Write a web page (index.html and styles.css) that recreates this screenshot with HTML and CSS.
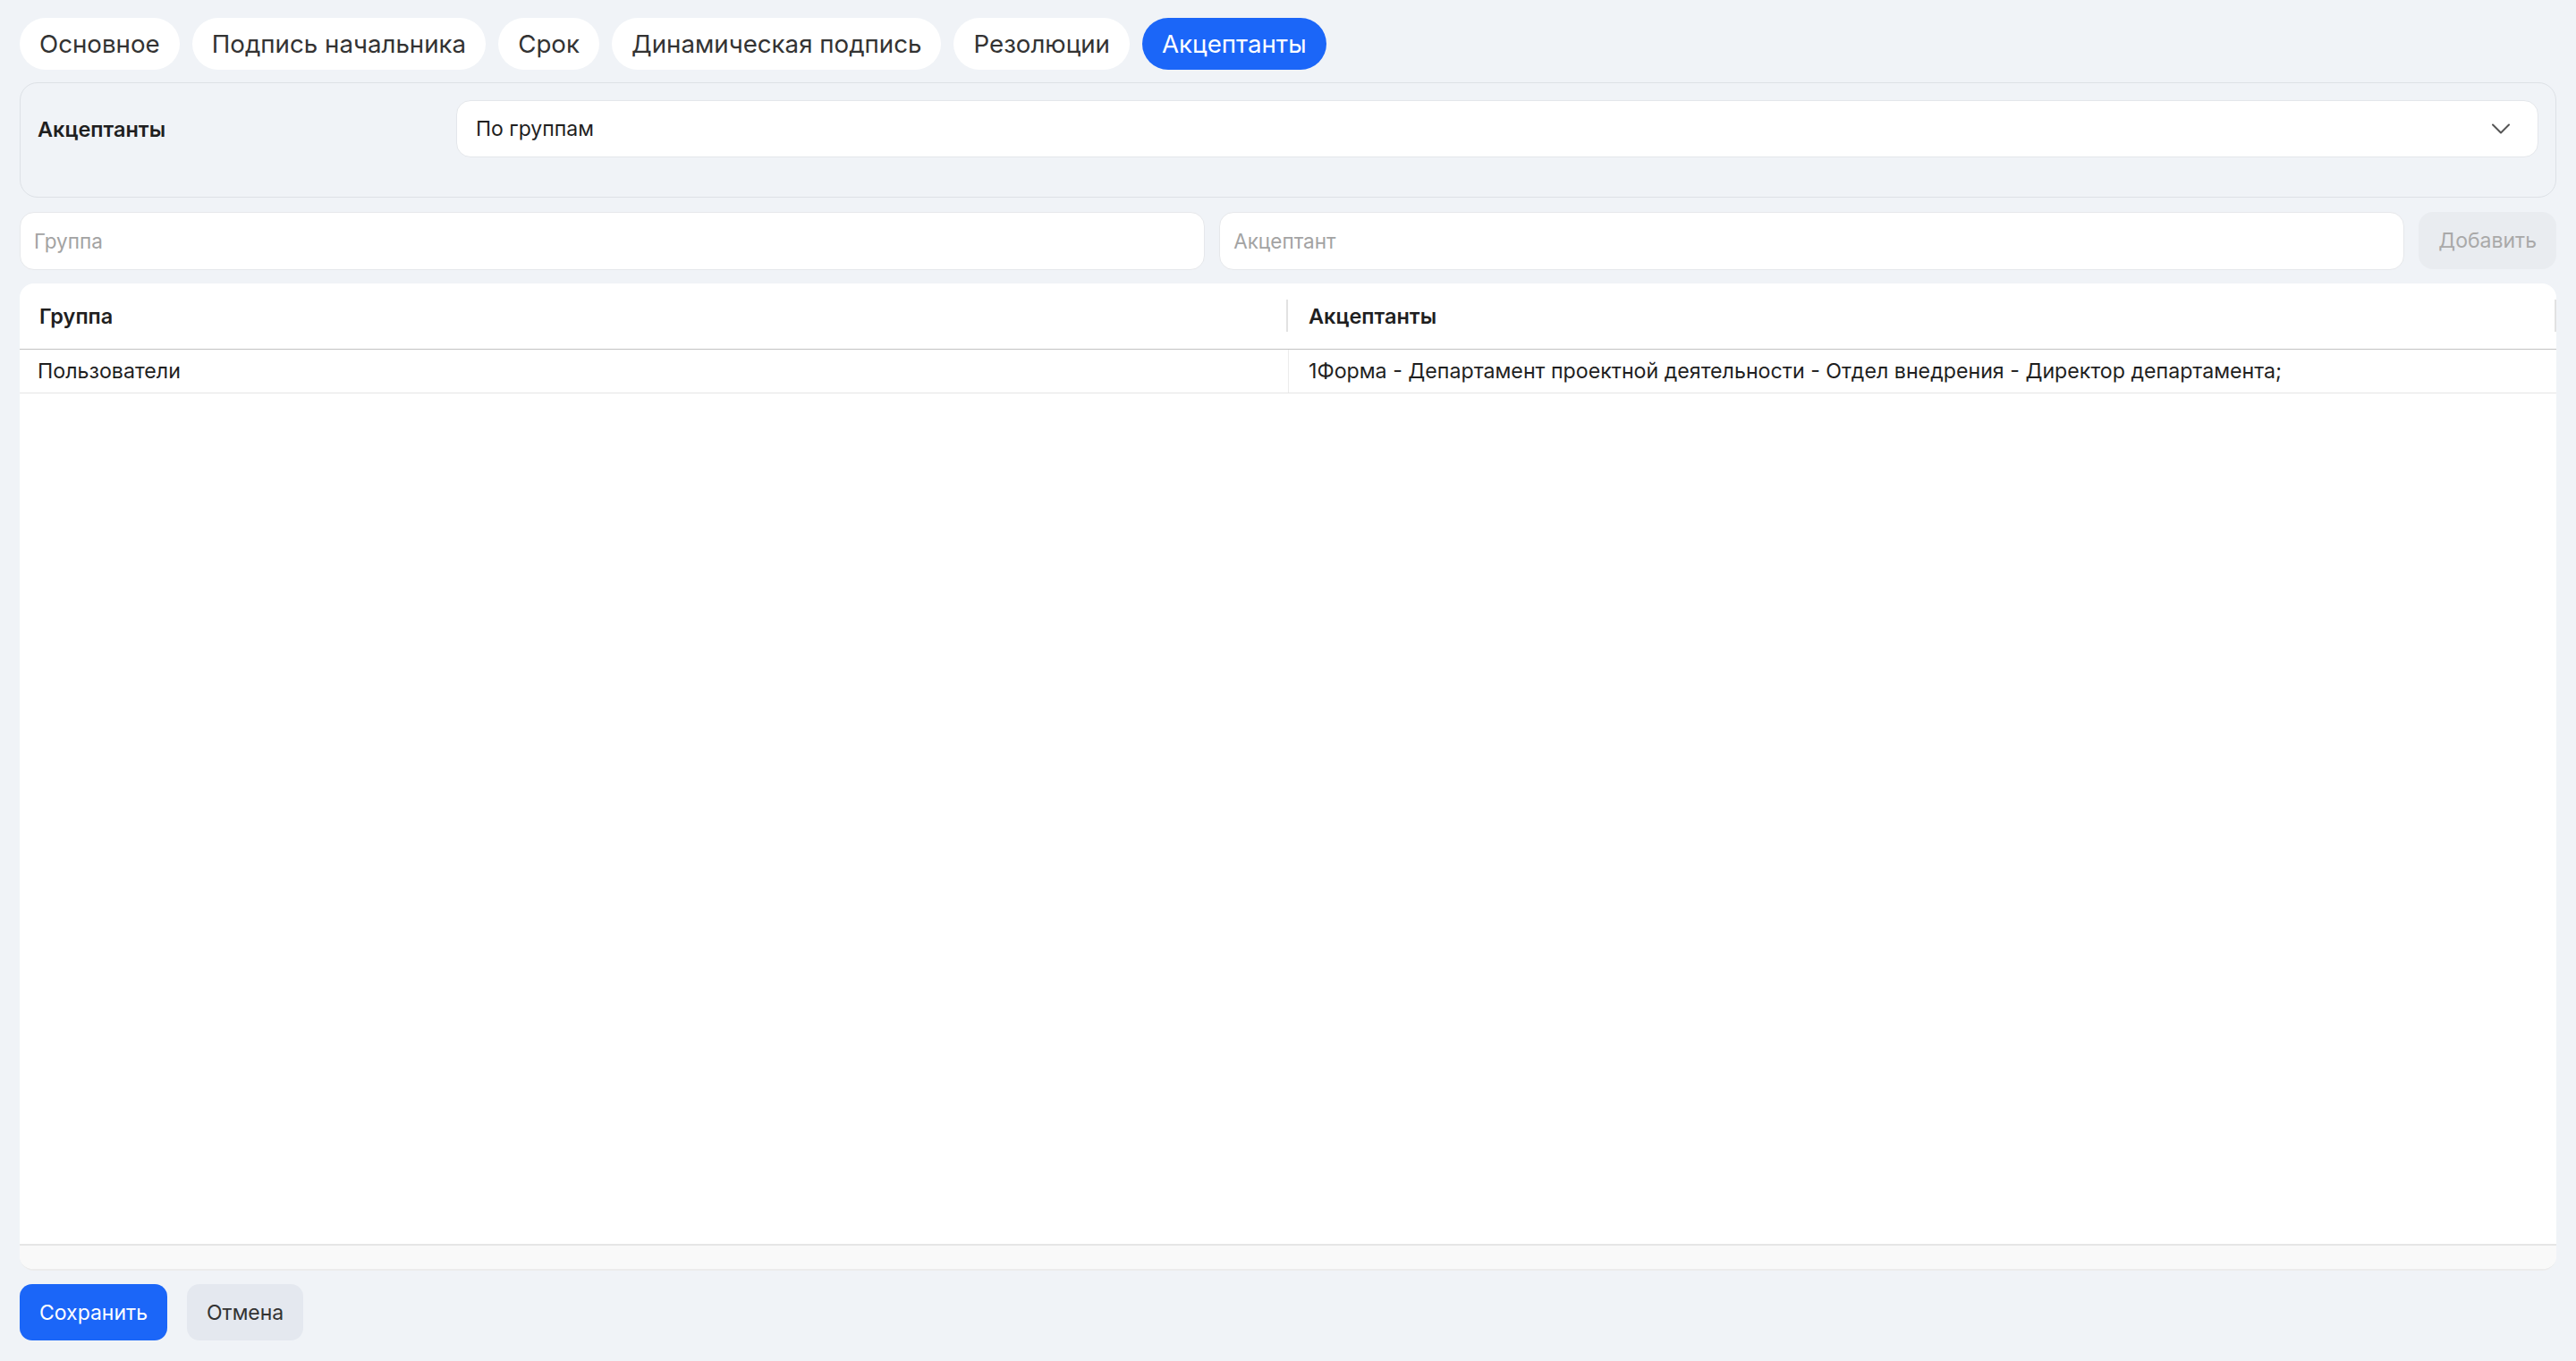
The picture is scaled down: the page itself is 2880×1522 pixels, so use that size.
FILE: index.html
```html
<!DOCTYPE html>
<html lang="ru">
<head>
<meta charset="utf-8">
<title>Акцептанты</title>
<link rel="stylesheet" href="styles.css">
</head>
<body>
<div class="page">
  <nav class="tabs">
    <button class="tab">Основное</button>
    <button class="tab">Подпись начальника</button>
    <button class="tab">Срок</button>
    <button class="tab">Динамическая подпись</button>
    <button class="tab">Резолюции</button>
    <button class="tab tab-active">Акцептанты</button>
  </nav>

  <section class="panel">
    <div class="panel-label">Акцептанты</div>
    <div class="select">
      <span class="select-value">По группам</span>
      <svg class="chevron" width="22" height="14" viewBox="0 0 22 14" fill="none"><path d="M2 2.5 L11 11.5 L20 2.5" stroke="#555" stroke-width="2" stroke-linecap="round" stroke-linejoin="round"/></svg>
    </div>
  </section>

  <div class="add-row">
    <input class="field" type="text" placeholder="Группа">
    <input class="field" type="text" placeholder="Акцептант">
    <button class="btn-add" disabled>Добавить</button>
  </div>

  <div class="table">
    <div class="thead">
      <div class="th">Группа</div>
      <div class="th">Акцептанты</div>
    </div>
    <div class="tbody">
      <div class="tr">
        <div class="td">Пользователи</div>
        <div class="td">1Форма - Департамент проектной деятельности - Отдел внедрения - Директор департамента;</div>
      </div>
    </div>
    <div class="tfoot"></div>
  </div>

  <div class="actions">
    <button class="btn btn-primary">Сохранить</button>
    <button class="btn btn-secondary">Отмена</button>
  </div>
</div>
</body>
</html>
```

FILE: styles.css
```css
* { box-sizing: border-box; }

html, body {
  margin: 0;
  padding: 0;
  height: 100%;
}

body {
  background: #f0f3f7;
  font-family: Inter, "Noto Sans", "Liberation Sans", sans-serif;
  font-size: 23px;
  color: #1f1f1f;
}

.page {
  height: 100vh;
  display: flex;
  flex-direction: column;
  gap: 15px;
  padding: 20px 22px 23px 22px;
}

/* tabs */
.tabs {
  display: flex;
  gap: 14px;
  margin-bottom: -1px;
}

.tab {
  font-family: inherit;
  font-size: 27.7px;
  font-weight: 400;
  color: #333;
  background: #fff;
  border: none;
  border-radius: 29px;
  height: 58px;
  padding: 0 22px;
  cursor: pointer;
}

.tab-active {
  background: #1b66f8;
  color: #fff;
}

/* settings panel */
.panel {
  display: grid;
  grid-template-columns: 468px 1fr;
  align-items: center;
  border: 1px solid #dde1e6;
  border-radius: 20px;
  padding: 19px 19px 44px 19px;
}

.panel-label {
  font-weight: 600;
  font-size: 23.5px;
  color: #1f1f1f;
}

.select {
  height: 64px;
  background: #fff;
  border: 1px solid #e4e7eb;
  border-radius: 16px;
  display: flex;
  align-items: center;
  justify-content: space-between;
  padding: 0 30px 0 21px;
}

.select-value { color: #1f1f1f; }

.chevron { display: block; }

/* add row */
.add-row {
  display: grid;
  grid-template-columns: 1fr 1fr auto;
  gap: 16px;
  margin-top: 1px;
}

.field {
  height: 65px;
  font-family: inherit;
  font-size: 22.5px;
  color: #1f1f1f;
  background: #fff;
  border: 1px solid #e6e8eb;
  border-radius: 16px;
  padding: 0 15px;
  outline: none;
}

.field::placeholder { color: #a3a3a3; }

.btn-add {
  height: 64px;
  font-family: inherit;
  font-size: 23px;
  color: #a9a9a9;
  background: #e9ecf0;
  border: none;
  border-radius: 16px;
  padding: 0 22px;
}

/* table */
.table {
  flex: 1;
  display: flex;
  flex-direction: column;
  background: #fff;
  border-radius: 16px;
  overflow: hidden;
  border-bottom: 2px solid #ececec;
}

.thead {
  display: grid;
  grid-template-columns: 1fr 1fr;
  height: 74px;
  border-bottom: 1px solid #c2c2c2;
}

.th {
  position: relative;
  display: flex;
  align-items: center;
  padding: 0 22px;
  font-weight: 600;
  font-size: 23.5px;
  color: #1f1f1f;
}

.th::after {
  content: "";
  position: absolute;
  right: 0;
  top: 18px;
  bottom: 19px;
  width: 2px;
  background: #e2e2e2;
}

.th + .th { padding-left: 23px; }

.tbody { flex: 1; }

.tr {
  display: grid;
  grid-template-columns: 1fr 1fr;
  height: 49px;
  border-bottom: 1px solid #e5e5e5;
}

.td {
  display: flex;
  align-items: center;
  padding: 0 20px;
  font-size: 23.2px;
  color: #1f1f1f;
  white-space: nowrap;
}

.td + .td {
  border-left: 1px solid #ececec;
  padding-left: 22px;
}

.tfoot {
  height: 28px;
  background: #f9f9f9;
  border-top: 2px solid #e6e6e6;
}

/* actions */
.actions {
  display: flex;
  gap: 22px;
}

.btn {
  height: 63px;
  font-family: inherit;
  font-size: 23px;
  border: none;
  border-radius: 14px;
  padding: 0 22px;
  cursor: pointer;
}

.btn-primary {
  background: #1b66f8;
  color: #fff;
}

.btn-secondary {
  background: #e4e8ef;
  color: #333;
}
```
